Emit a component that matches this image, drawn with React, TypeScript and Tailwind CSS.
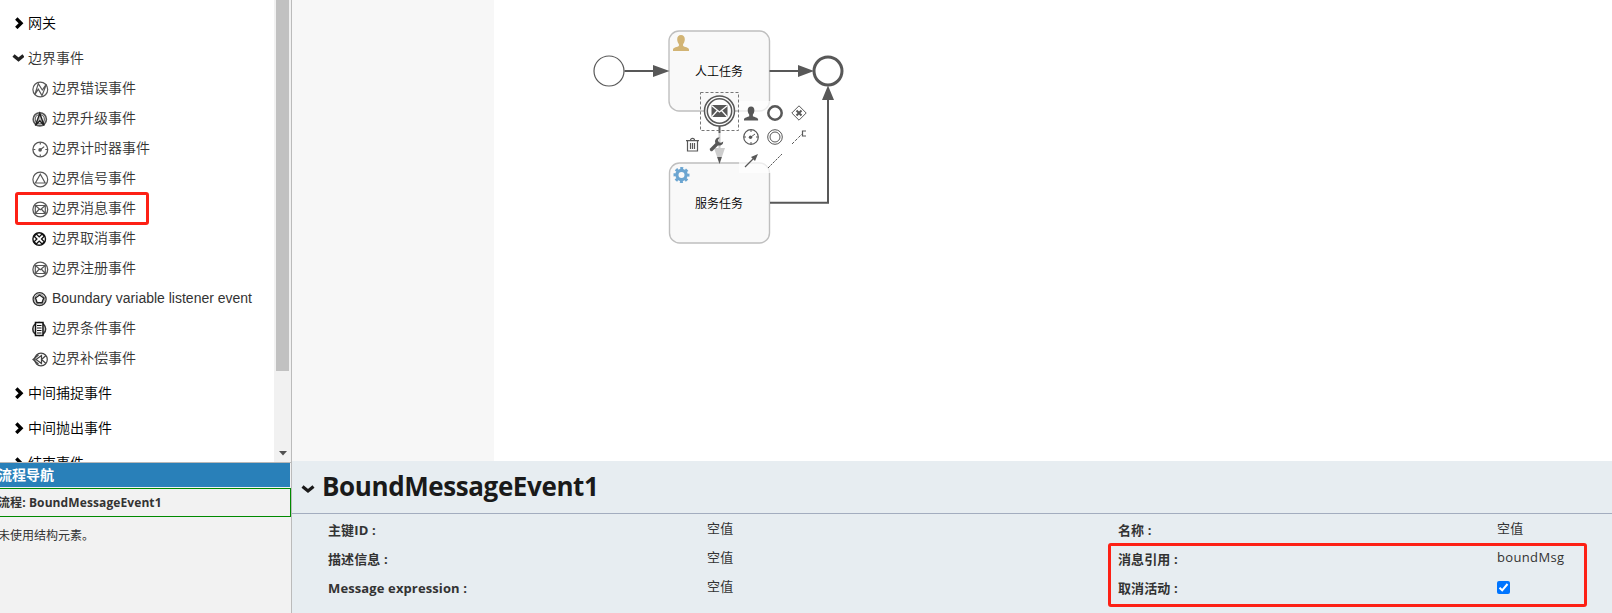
import React from "react";

const CJK = "font-['Liberation_Sans','Noto_Sans_CJK_SC',sans-serif]";
const UI = "font-['Open_Sans','Noto_Sans_CJK_SC',sans-serif]";
const INK = "#585858";

type Kind = "error" | "escalation" | "timer" | "signal" | "message" | "cancel" | "variable" | "condition" | "compensate";

function EventIcon({ kind }: { kind: Kind }) {
  return (
    <svg width="17" height="17" viewBox="0 0 17 17" fill="none" stroke={INK} strokeWidth="1.2" className="block shrink-0">
      {kind === "error" && (
        <>
          <circle cx="8.3" cy="8.5" r="7.4" strokeWidth="1.2" />
          <path d="M2.800 13.600L6.300 2.600l4 6.400L14.400 3.200l-4.400 11.400-3.700-6.400z" />
        </>
      )}
      {kind === "escalation" && (
        <>
          <circle cx="7.8" cy="8.3" r="6.6" stroke="#555" strokeWidth="1.6" />
          <circle cx="7.8" cy="8.3" r="4.6" stroke="#666" strokeWidth="1.2" />
          <path d="M7.800 2.400L3.400 14.500l4.400-4.700 4.400 4.700z" fill="#bbb" stroke="#222" strokeWidth="1.4" />
        </>
      )}
      {kind === "timer" && (
        <>
          <circle cx="8.3" cy="8.5" r="7.4" strokeWidth="1.3" />
          <path d="M8.300 1.500v2M8.300 13.500v2M1.300 8.500h2M13.300 8.500h2M8.300 8.800L12.200 5.600" />
          <circle cx="8.1" cy="8.9" r="1.8" fill={INK} stroke="none" />
        </>
      )}
      {kind === "signal" && (
        <>
          <circle cx="8.3" cy="8.5" r="7.4" strokeWidth="1.2" />
          <path d="M8.300 3.200l4.900 8.800H3.400z" />
        </>
      )}
      {kind === "message" && (
        <>
          <circle cx="8.3" cy="8.5" r="7.4" strokeWidth="1.3" />
          <path d="M3.300 4.500h10v8h-10zM3.300 4.500l5 4.200 5-4.200M3.300 12.500l4-4.500M13.300 12.500l-4-4.500" />
        </>
      )}
      {kind === "cancel" && (
        <>
          <circle cx="7.2" cy="8" r="6.3" stroke="#111" strokeWidth="1.4" />
          <path d="M4.300 3l2.900 2.900L10.100 3l2.200 2.200L9.500 8l2.800 2.800-2.200 2.200-2.900-2.900L4.300 13l-2.200-2.200L4.900 8 2.100 5.200z" stroke="#111" strokeWidth="1.3" />
        </>
      )}
      {kind === "variable" && (
        <>
          <circle cx="7.6" cy="8.2" r="6.5" stroke="#333" strokeWidth="1.3" />
          <circle cx="7.6" cy="8.2" r="5" stroke="#777" strokeWidth=".8" />
          <path d="M7.600 4l4.100 3-1.600 4.700H5.100L3.500 7z" fill="#fff" stroke="#222" strokeWidth="1.4" />
        </>
      )}
      {kind === "condition" && (
        <>
          <circle cx="7.2" cy="8" r="6.4" stroke="#333" strokeWidth="1.6" />
          <path d="M3.500 1.500h7.500v13H3.500z" fill="#fff" stroke="#111" strokeWidth="1.5" />
          <path d="M5 4.500h4.500M5 7h4.500M5 9.500h4.500M5 12h4.500" stroke="#111" />
        </>
      )}
      {kind === "compensate" && (
        <>
          <circle cx="9" cy="8.5" r="6.3" strokeWidth="1.2" stroke="#444" />
          <path d="M6.500 4L1 8.500 6.500 13M9.500 4.500l-5.500 4 5.500 4zM14 4.500l-4.500 4 4.500 4" stroke="#444" />
        </>
      )}
    </svg>
  );
}

function Chevron({ open = false }: { open?: boolean }) {
  return (
    <svg width="12" height="12" viewBox="0 0 12 12" className="shrink-0" fill="none" strokeWidth="3.4" stroke={open ? "#222" : "#000"}>
      <path d={open ? "M1.500 3.500L6.500 7.500l5-4" : "M4.300 1.500L9 6.200 4.300 10.900"} />
    </svg>
  );
}

function Group({ label, open }: { label: string; open?: boolean }) {
  return (
    <div className={`flex h-[35px] shrink-0 items-center gap-1 pl-3 ${open ? "text-[#333]" : "text-black"}`}>
      <Chevron open={open} />
      <span>{label}</span>
    </div>
  );
}

const EVENTS: { kind: Kind; label: string }[] = [
  { kind: "error", label: "边界错误事件" },
  { kind: "escalation", label: "边界升级事件" },
  { kind: "timer", label: "边界计时器事件" },
  { kind: "signal", label: "边界信号事件" },
  { kind: "message", label: "边界消息事件" },
  { kind: "cancel", label: "边界取消事件" },
  { kind: "message", label: "边界注册事件" },
  { kind: "variable", label: "Boundary variable listener event" },
  { kind: "condition", label: "边界条件事件" },
  { kind: "compensate", label: "边界补偿事件" },
];

function Palette() {
  return (
    <div className="flex h-[462px] overflow-hidden bg-white">
      <div className={`flex w-[274px] flex-col pt-[5px] text-[14px] leading-5 font-[350] ${CJK}`}>
        <Group label="网关" />
        <Group label="边界事件" open />
        <div className="relative -mt-[2px] mb-[2px] flex flex-col text-[#333]">
          {EVENTS.map((e) => (
            <div key={e.label} className="flex h-[30px] items-center gap-[3px] pl-8">
              <span className="pt-[2px]"><EventIcon kind={e.kind} /></span>
              <span className="whitespace-nowrap">{e.label}</span>
            </div>
          ))}
          <div className="absolute left-[15px] top-[119px] h-[33px] w-[134px] rounded-[3px] border-[3px] border-[#fd2015]" />
        </div>
        <Group label="中间捕捉事件" />
        <Group label="中间抛出事件" />
        <Group label="结束事件" />
      </div>
      <div className="flex w-[17px] flex-col items-center justify-between bg-[#f1f1f1] pb-[6px]">
        <div className="h-[371px] w-[13px] bg-[#c1c1c1]" />
        <svg width="8" height="5" viewBox="0 0 8 5"><path d="M0 0h8L4 4.500z" fill="#505050" /></svg>
      </div>
    </div>
  );
}

function Navigator() {
  return (
    <div className={`flex flex-1 flex-col border-t border-[#b8b8b8] bg-[#f2f2f2] text-[#333] ${UI}`}>
      <div className="flex h-6 w-[290px] items-center bg-[#2980b9] text-[14px] font-bold text-white">
        <span className="-ml-[2px] -mt-[2px] whitespace-nowrap">流程导航</span>
      </div>
      <div className="mt-[1px] flex h-[29px] items-center border border-l-0 border-[#008a00] text-[12px] font-bold tracking-[0.1px]">
        <span className="-ml-[2px] whitespace-nowrap">流程: BoundMessageEvent1</span>
      </div>
      <div className="-ml-[2px] pt-[9px] text-[12px] leading-5">未使用结构元素。</div>
    </div>
  );
}

function Person({ x, y, color }: { x: number; y: number; color: string }) {
  return (
    <path
      transform={`translate(${x} ${y})`}
      fill={color}
      stroke="none"
      d="M8 0C5.500 0 4.200 1.700 4.200 4.200c0 2 .8 3.800 1.700 4.800v2C4.800 12 0 12.300 0 14.500V16h16v-1.500C16 12.300 11.200 12 10.100 11V9c.9-1 1.700-2.800 1.700-4.800C11.800 1.700 10.500 0 8 0z"
    />
  );
}

function Diagram() {
  return (
    <svg width="1320" height="461" viewBox="292 0 1320 461" className="block" fill="none" stroke={INK}>
      <rect x="292" y="0" width="202" height="461" fill="#f7f7f7" stroke="none" />
      <g fill="#f9f9f9" stroke="#bfbfbf" strokeWidth="1.4">
        <rect x="669" y="31" width="100.5" height="80" rx="10" />
        <rect x="669.5" y="163" width="100" height="80" rx="10" />
      </g>
      <circle cx="609" cy="71" r="15" fill="#fff" strokeWidth="1.2" />
      <circle cx="828" cy="71" r="14" fill="#fff" strokeWidth="3" />
      <g strokeWidth="2">
        <path d="M624.500 71H655M769.500 71H800M719.500 126V150M770 202.700H828V98" />
      </g>
      <g fill={INK} stroke="none">
        <path d="M653 65l16.500 6-16.500 6zM798 65l16 6-16 6zM822 100l6-14.500L834 100zM714 148h11l-5.500 16z" />
      </g>
      <Person x={673} y={35} color="#d2b474" />
      <g transform="translate(681.5 175)" stroke="#6ba5d1">
        <circle r="4.6" strokeWidth="3.2" />
        <circle r="6.8" strokeWidth="2.4" strokeDasharray="3 2.34" strokeDashoffset="1.5" />
      </g>
      <g className={`text-[12px] font-[350] ${CJK}`} fill="#000" stroke="none">
        <text x="695" y="76">人工任务</text>
        <text x="695" y="208">服务任务</text>
      </g>
      <g fill="#fff" stroke="none" fillOpacity=".7">
        <rect x="739" y="101" width="72" height="48" />
        <rect x="739" y="149" width="48" height="24" />
        <rect x="681" y="133" width="48" height="24" />
      </g>
      <circle cx="719.5" cy="111" r="15" fill="#fff" strokeWidth="1.5" />
      <circle cx="719.5" cy="111" r="12.2" strokeWidth="1.5" />
      <rect x="711.5" y="105" width="16" height="12" fill={INK} stroke="none" />
      <path d="M711.500 105.500l8 6.500 8-6.500M711.500 117l6-6.500M727.500 117l-6-6.500" stroke="#fff" strokeWidth="1.2" />
      <rect x="700.5" y="92.5" width="38" height="38" strokeDasharray="3 2" stroke="#777" />
      <g transform="translate(686 138)" strokeWidth="1.2">
        <path d="M0 2.600h13M4.500 2.300C4.500-.3 8.500-.3 8.500 2.300M1.500 3v10h10V3M4.500 5v6M6.500 5v6M8.500 5v6" />
      </g>
      <path d="M711.500 149.500l6-6" strokeWidth="3.4" strokeLinecap="round" />
      <path d="M723.300 141.500a4 4 0 0 1-6 3.500l-2-2a4 4 0 0 1 4.500-5.500l-2 2.500 1 2.200 2.200.5z" fill={INK} stroke="none" />
      <g transform="translate(744 106.500) scale(.88)"><Person x={0} y={0} color={INK} /></g>
      <circle cx="775" cy="113" r="6.7" strokeWidth="2.5" />
      <path d="M799 105.800l7.200 7.200-7.200 7.200-7.200-7.200z" />
      <path d="M796.500 110.500l5 5M801.500 110.500l-5 5" strokeWidth="2" />
      <g transform="translate(751 137)">
        <circle r="7.3" strokeWidth="1.2" />
        <path d="M0-7v2M0 5v2M-7 0h2M5 0h2M0 0L4-3" />
        <circle cx="-.5" cy=".3" r="1.7" fill={INK} stroke="none" />
      </g>
      <circle cx="775" cy="137" r="7.3" />
      <circle cx="775" cy="137" r="5" />
      <path d="M792 144l10-10" strokeDasharray="3 1.5" />
      <path d="M806 131h-3.500v5h3.500" strokeWidth="1.2" />
      <path d="M745 167l9-9" strokeWidth="1.3" />
      <path d="M758 154l-3 7-4-4z" fill={INK} stroke="none" />
      <path d="M768 168l14-14" strokeDasharray="2.5 1" />
    </svg>
  );
}

function Field({ label, children }: { label: string; children: React.ReactNode }) {
  return (
    <div className="flex h-[29px]">
      <div className="w-[379px] pt-[6px] font-bold tracking-[0.12px]">{label}</div>
      <div className="pt-1 tracking-[0.35px]">{children}</div>
    </div>
  );
}

function Properties() {
  return (
    <div className={`flex flex-1 flex-col bg-[#e7edf1] text-[#333] ${UI}`}>
      <div className="flex h-[53px] items-center gap-[7px] border-b border-[#a3adbf] pl-[9px]">
        <svg width="14" height="12" viewBox="0 0 14 12" fill="none" stroke="#1a1a1a" strokeWidth="3.2" className="mt-1">
          <path d="M1.500 3.500L7 8l5.500-4.500" />
        </svg>
        <h1 className="-mt-[2px] text-[26px] font-bold leading-8 tracking-[-0.4px] text-[#1a1a1a]">BoundMessageEvent1</h1>
      </div>
      <div className="grid grid-cols-[790px_1fr] pl-9 text-[13px] leading-5">
        <Field label="主键ID :">空值</Field>
        <Field label="名称 :">空值</Field>
        <Field label="描述信息 :">空值</Field>
        <div className="relative">
          <Field label="消息引用 :">boundMsg</Field>
          <div className="absolute -left-[10px] top-0 h-[64px] w-[479px] rounded-[3px] border-[3px] border-[#fd2015]" />
        </div>
        <Field label="Message expression :">空值</Field>
        <Field label="取消活动 :">
          <span className="mt-[5px] flex size-[13px] items-center justify-center rounded-[2px] bg-[#0075ff]">
            <svg width="11" height="11" viewBox="0 0 11 11" fill="none" stroke="#fff" strokeWidth="2"><path d="M1.500 5.700L4.200 8.300 9.500 2" /></svg>
          </span>
        </Field>
      </div>
    </div>
  );
}

export default function App() {
  return (
    <div className="flex h-[613px] w-[1612px] overflow-hidden bg-white">
      <aside className="flex w-[292px] shrink-0 flex-col border-r border-[#bbb]">
        <Palette />
        <Navigator />
      </aside>
      <main className="flex flex-1 flex-col">
        <Diagram />
        <Properties />
      </main>
    </div>
  );
}
